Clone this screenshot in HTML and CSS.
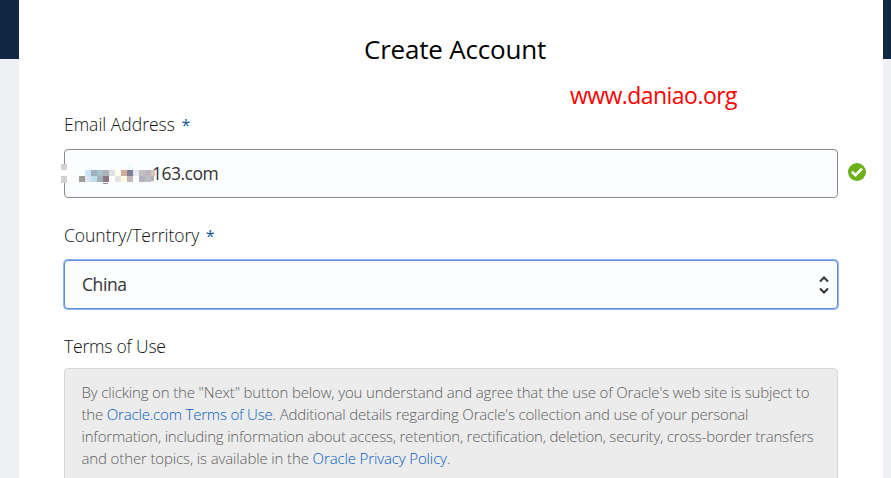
FILE: index.html
```html
<!DOCTYPE html>
<html lang="en">
<head>
<meta charset="utf-8">
<title>Create Account</title>
<link rel="stylesheet" href="styles.css">
</head>
<body>
<main class="card">
  <h1>Create Account</h1>
  <div class="watermark">www.daniao.org</div>
  <form class="form">
    <label class="label">Email Address <span class="req">*</span></label>
    <div class="field email">
      <svg class="mosaic" width="96" height="24" viewBox="0 0 96 24" shape-rendering="crispEdges" aria-hidden="true">
        <path fill="#fff" d="M0 2h6v18H0z"/>
        <path fill="#d2d2d2" d="M0 2h6v6H0zM0 14h6v7H0z"/>
        <path fill="#c9e4fb" d="M24 8h6v6h-6z"/>
        <path fill="#9eb0bb" d="M30 8h6v6h-6z"/>
        <path fill="#a5c4ce" d="M36 8h6v6h-6z"/>
        <path fill="#b0b2b4" d="M42 8h6v6h-6z"/>
        <path fill="#dfe0e5" d="M48 8h6v6h-6z"/>
        <path fill="#fffff0" d="M54 8h6v6h-6z"/>
        <path fill="#d4ab9b" d="M60 8h6v6h-6z"/>
        <path fill="#7e7f9b" d="M66 8h6v6h-6z"/>
        <path fill="#e5e9f1" d="M72 8h6v6h-6z"/>
        <path fill="#c4bdbd" d="M78 8h6v6h-6z"/>
        <path fill="#bbb7c0" d="M84 8h6v6h-6z"/>
        <path fill="#dbc5bd" d="M90 8h4v6h-4z"/>
        <path fill="#9d9b98" d="M18 14h6v6h-6z"/>
        <path fill="#dbe2ef" d="M24 14h6v6h-6z"/>
        <path fill="#bfdfec" d="M30 14h6v6h-6z"/>
        <path fill="#a3b1b7" d="M36 14h6v6h-6z"/>
        <path fill="#8b7585" d="M42 14h6v6h-6z"/>
        <path fill="#e5e3e3" d="M54 14h6v6h-6z"/>
        <path fill="#fff9e4" d="M60 14h6v6h-6z"/>
        <path fill="#bfb7b8" d="M66 14h6v6h-6z"/>
        <path fill="#b2b0c2" d="M78 14h6v6h-6z"/>
        <path fill="#b9bfc1" d="M84 14h6v6h-6z"/>
        <path fill="#b5adb5" d="M90 14h3v5h-3z"/>
        <path fill="#eefafe" d="M66 2h6v6h-6z"/>
        <path fill="#8d8f90" d="M42 21h5v1h-5z"/>
      </svg>
      <span class="value">163.com</span>
      <svg class="ok" width="18" height="18" viewBox="0 0 18 18" aria-hidden="true"><circle cx="9" cy="9" r="9" fill="#6db01c"/><path d="M3.9 8.8l3.6 3.4 6.4-6.6" fill="none" stroke="#fff" stroke-width="2.7"/></svg>
    </div>
    <label class="label country">Country/Territory <span class="req">*</span></label>
    <div class="field select"><span class="choice">China</span>
      <svg class="arrows" width="10" height="18" viewBox="0 0 10 18" aria-hidden="true"><path d="M1 5.5l4-4 4 4M1 12.5l4 4 4-4" fill="none" stroke="#333" stroke-width="2"/></svg>
    </div>
    <div class="label heading">Terms of Use</div>
    <p class="terms">
      <span class="line first">By clicking on the "Next" button below, you understand and agree that the use of Oracle's web site is subject to</span>
      <span class="line second">the <a>Oracle.com Terms of Use</a>. Additional details regarding Oracle's collection and use of your personal</span>
      <span class="line third">information, including information about access, retention, rectification, deletion, security, cross-border transfers</span>
      <span class="line fourth">and other topics, is available in the <a>Oracle Privacy Policy</a>.</span>
    </p>
  </form>
</main>
</body>
</html>
```
FILE: styles.css
```css
* { box-sizing: border-box; }
body { margin: 0; height: 478px; overflow: hidden; background: linear-gradient(#102844 59px, #eef0f4 59px); font-family: "Open Sans", "Noto Sans", sans-serif; color: #333; }
.card { display: flow-root; margin: 0 8px 0 19px; height: 478px; padding: 0 45px; background: #fff; overflow: hidden; }
h1 { margin: 31px 0 0; padding-left: 300px; height: 36px; font-size: 26px; line-height: 36px; font-weight: 400; letter-spacing: -.2px; color: #000; white-space: nowrap; }
.watermark { margin-top: 12px; padding-left: 506px; height: 32px; line-height: 32px; font-size: 23px; letter-spacing: -.55px; color: #f00; white-space: nowrap; }
.label { display: block; height: 38px; line-height: 26px; font-size: 17.5px; font-weight: 300; color: #111; white-space: nowrap; }
.country { letter-spacing: -.03px; }
.heading { height: 35px; letter-spacing: -.2px; }
.req { color: #0a5a96; margin-left: 2px; font-weight: 400; font-size: 16px; }
.field { position: relative; display: flex; align-items: center; width: 774px; height: 49px; margin-bottom: 24px; padding: 0 0 2px 17px; border: 1px solid #8a8a8e; border-radius: 4px; background: #fcfdff; font-size: 17.5px; }
.value { margin-left: 70px; letter-spacing: -.5px; }
.choice { letter-spacing: -.4px; }
.mosaic { position: absolute; left: -4px; top: 12px; }
.ok { position: absolute; left: 783px; top: 13px; }
.select { border-color: #5f8fd8; box-shadow: 0 0 0 1px #8fb6ef; justify-content: space-between; padding-right: 8px; }
.arrows { margin-top: 2px; }
.terms { margin: 0; width: 774px; height: 140px; padding: 12px 17px 12px 16.5px; border: 1px solid #d3d8dc; border-radius: 4px; background: #ececec; color: #606060; font-size: 15px; font-weight: 300; line-height: 22px; white-space: nowrap; }
.line { display: block; width: max-content; }
.first { letter-spacing: -.15px; }
.second { letter-spacing: -.18px; }
.third { letter-spacing: -.2px; }
.fourth { letter-spacing: -.13px; }
a { color: #0560c4; }
```
